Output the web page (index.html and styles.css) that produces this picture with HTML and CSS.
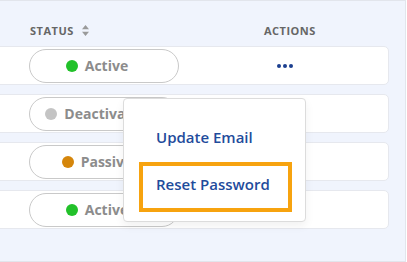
FILE: index.html
```html
<!DOCTYPE html>
<html>
<head>
<meta charset="utf-8">
<link rel="stylesheet" href="styles.css">
</head>
<body>
<div class="panel">
  <div class="head">
    <div class="col-status">STATUS
      <svg class="sort" width="7" height="11" viewBox="0 0 7 11"><path d="M3.5 0 L7 4.2 H0 Z M3.5 11 L0 6.8 H7 Z" fill="#9a9a9a"/></svg>
    </div>
    <div class="col-actions">ACTIONS</div>
  </div>
  <div class="rows">
    <div class="row">
      <div class="pill"><span class="dot green"></span>Active</div>
      <div class="more"><span></span><span></span><span></span></div>
    </div>
    <div class="row">
      <div class="pill"><span class="dot gray"></span>Deactivated</div>
    </div>
    <div class="row">
      <div class="pill"><span class="dot amber"></span>Passive</div>
    </div>
    <div class="row">
      <div class="pill"><span class="dot green"></span>Active</div>
    </div>
  </div>
  <div class="menu">
    <div class="item">Update Email</div>
    <div class="item focus">Reset Password</div>
  </div>
</div>
</body>
</html>
```

FILE: styles.css
```css
html, body {
  margin: 0;
  padding: 0;
  background: #ffffff;
  font-family: "Open Sans", "Lato", sans-serif;
}
.panel {
  position: relative;
  width: 405px;
  height: 260px;
  background: #f0f4fd;
  border-top: 1px solid #e2e5ec;
  border-right: 1px solid #e2e5ec;
  border-bottom: 1px solid #e2e5ec;
  overflow: hidden;
}
.head {
  display: flex;
  align-items: center;
  height: 20px;
  margin-top: 19px;
  font-size: 11px;
  font-weight: 700;
  color: #666666;
  letter-spacing: 0.5px;
}
.col-status {
  width: 234px;
  padding-left: 30px;
  display: flex;
  align-items: center;
  gap: 8px;
}
.rows {
  display: flex;
  flex-direction: column;
  gap: 9px;
  margin-top: 6px;
  margin-left: -10px;
  width: 399px;
}
.row {
  height: 37px;
  background: #ffffff;
  border: 1px solid #e6e8ee;
  border-radius: 5px;
  display: flex;
  align-items: center;
  padding-left: 38px;
}
.pill {
  box-sizing: border-box;
  width: 150px;
  height: 34px;
  border: 1px solid #c9c9c9;
  border-radius: 17px;
  display: flex;
  align-items: center;
  justify-content: center;
  padding-right: 14px;
  gap: 7px;
  font-size: 14px;
  font-weight: 700;
  color: #8c8c8c;
  white-space: nowrap;
}
.dot {
  flex: none;
  width: 12px;
  height: 12px;
  border-radius: 50%;
  display: inline-block;
}
.green { background: #22c12a; }
.gray { background: #c4c4c4; }
.amber { background: #d5860b; }
.more {
  margin-left: 98px;
  display: flex;
  gap: 2px;
}
.more span {
  width: 4px;
  height: 4px;
  border-radius: 50%;
  background: #1c3f8f;
}
.menu {
  position: absolute;
  left: 123px;
  top: 97px;
  width: 183px;
  height: 124px;
  background: #ffffff;
  border: 1px solid #dcdcdc;
  border-radius: 4px;
  box-shadow: 0 4px 10px rgba(0,0,0,0.06);
  display: flex;
  flex-direction: column;
  padding: 27px 13px 0 15px;
  box-sizing: border-box;
}
.item {
  font-size: 15px;
  font-weight: 600;
  color: #1f4c9c;
  padding-left: 17px;
  height: 22px;
  line-height: 22px;
}
.item.focus {
  margin-top: 14px;
  border: 4px solid #f7a30f;
  height: 50px;
  box-sizing: border-box;
  padding: 7px 0 0 13px;
}
```
